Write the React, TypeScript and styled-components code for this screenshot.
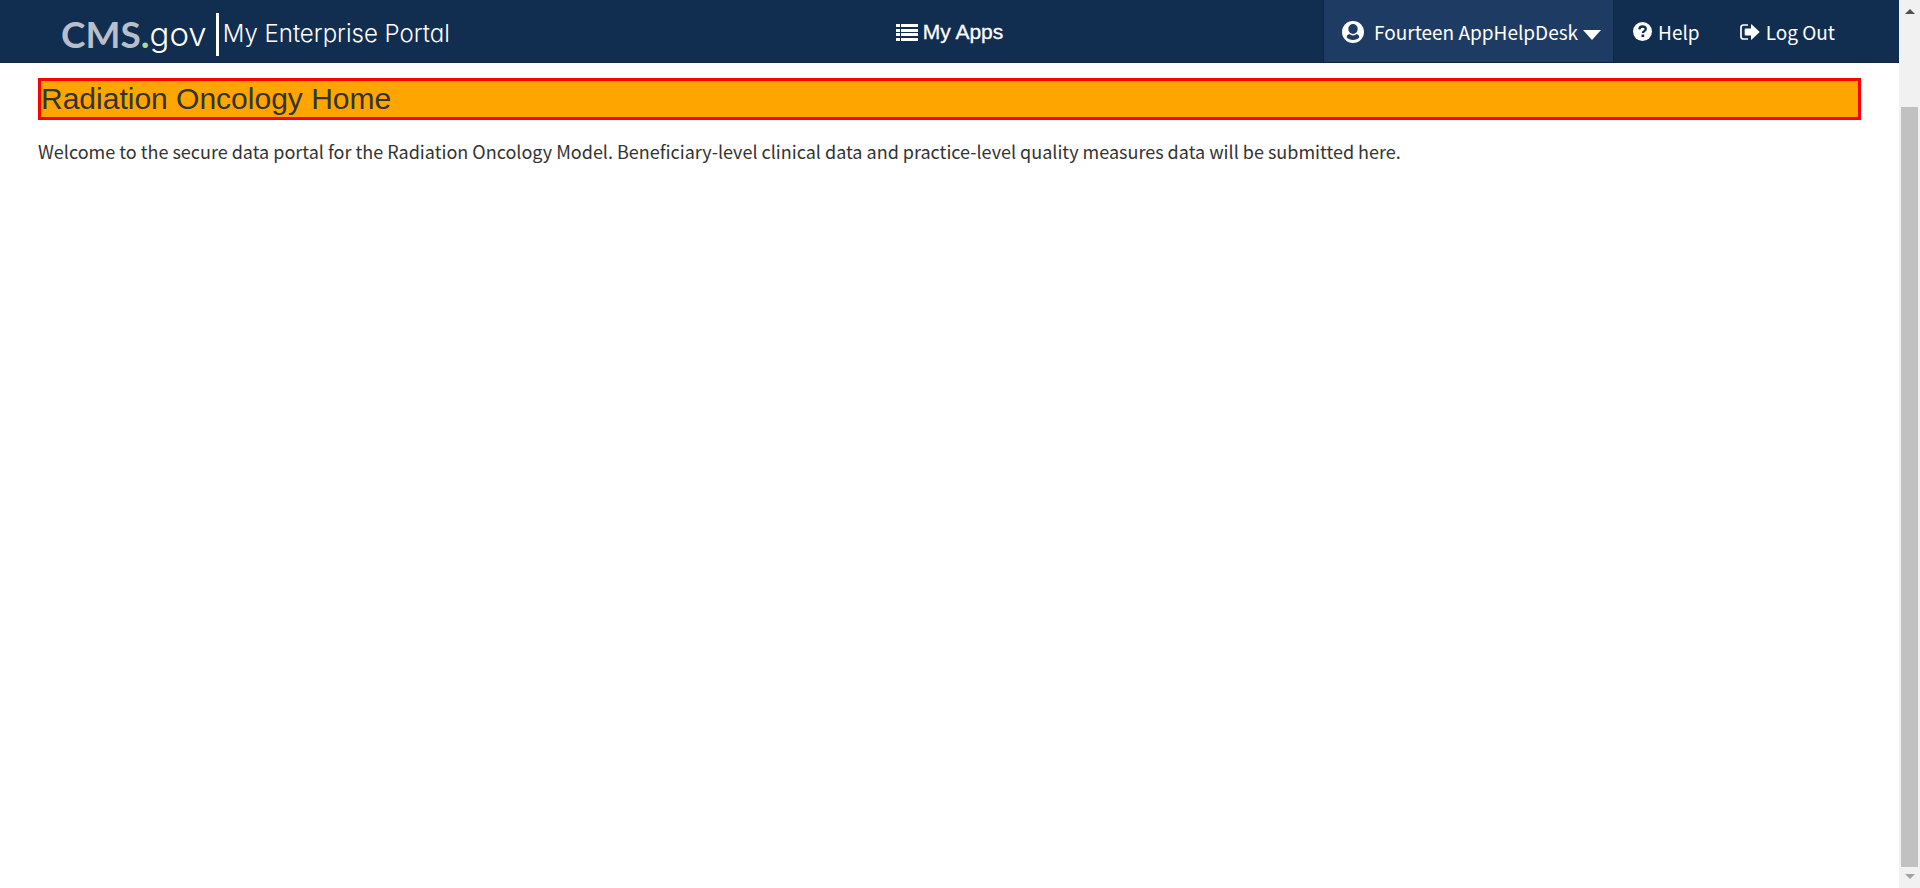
import React from "react";
import styled, { createGlobalStyle } from "styled-components";

const sans = `"Noto Sans CJK SC", "Noto Sans", sans-serif`;
const arial = `"Liberation Sans", Arial, sans-serif`;

const GlobalStyle = createGlobalStyle`
  *, *::before, *::after { box-sizing: border-box; }
  body { margin: 0; background: #fff; color: #333; font-family: ${sans}; }
`;

const Page = styled.div`
  display: flex;
  min-height: 100vh;
`;

const Content = styled.div`
  flex: 1;
  min-width: 0;
`;

const Header = styled.header`
  display: grid;
  grid-template-columns: 1fr auto 1fr;
  height: 63px;
  background: #112e51;
  border-bottom: 1px solid #0e2440;
  color: #fff;
`;

const Brand = styled.a`
  display: flex;
  align-items: center;
  padding: 6px 0 0 61px;
  color: #fff;
  text-decoration: none;
  white-space: nowrap;
`;

const BrandMark = styled.span`
  font: 700 37px/40px Lato, sans-serif;
  color: #b8bfca;
`;

const BrandDot = styled.span`
  color: #aed79b;
`;

const BrandGov = styled.span`
  font: 300 33px/40px Inter, sans-serif;
  color: #fff;
`;

const BrandDivider = styled.span`
  width: 3px;
  height: 43px;
  margin: 0 4px 0 9px;
  background: #fff;
`;

const BrandName = styled.span`
  font: 300 24px/40px Inter, sans-serif;
  font-feature-settings: "cv11";
`;

const AppsLink = styled.a`
  display: flex;
  align-items: center;
  gap: 5px;
  padding-top: 2px;
  color: #fff;
  font: 400 21px/24px ${arial};
  -webkit-text-stroke: 0.3px #fff;
  text-decoration: none;
`;

const Account = styled.nav`
  display: flex;
  justify-content: flex-end;
  padding-right: 43px;
`;

const AccountItem = styled.button<{ $active?: boolean }>`
  display: flex;
  align-items: center;
  padding: ${(p) => (p.$active ? "1px 12px 0 18px" : "1px 21px 0 19px")};
  border: solid #1c2430;
  border-width: 0 ${(p) => (p.$active ? 1 : 0)}px;
  background: ${(p) => (p.$active ? "#1e3c63" : "transparent")};
  color: #fff;
  font: 400 19px/30px ${sans};
  white-space: nowrap;
  cursor: pointer;
`;

const ItemLabel = styled.span<{ $gap: number }>`
  margin-left: ${(p) => p.$gap}px;
`;

const Caret = styled.span`
  margin: 6px 0 0 5px;
  border: 9px solid transparent;
  border-top: 10px solid #fff;
  border-bottom: 0;
`;

const Main = styled.main`
  padding: 15px 38px;
`;

const Title = styled.h1`
  margin: 0;
  border: 3px solid #f00;
  background: #ffa500;
  color: #333;
  font: 400 30px/36px ${arial};
`;

const Intro = styled.p`
  margin: 16px 0;
  font-size: 18px;
  line-height: 30px;
`;

const ScrollTrack = styled.div`
  position: sticky;
  top: 0;
  display: flex;
  flex-direction: column;
  align-items: center;
  justify-content: space-between;
  width: 21px;
  height: 100vh;
  padding: 9px 2px;
  background: #f1f1f1;
`;

const ScrollThumb = styled.div`
  flex: 1;
  width: 17px;
  margin: 93px 0 7px;
  background: #c1c1c1;
`;

const ScrollArrow = styled.span<{ $down?: boolean }>`
  border: solid transparent;
  border-width: ${(p) => (p.$down ? "5px 5px 0" : "0 5px 5px")};
  border-color: ${(p) => (p.$down ? "#a3a3a3 transparent" : "transparent transparent #505050")};
`;

const ListIcon = () => (
  <svg width="22" height="17" viewBox="0 0 22 17" fill="#fff" aria-hidden="true">
    {[0, 5, 9, 14].map((y) => (
      <React.Fragment key={y}>
        <rect x="0" y={y} width="4" height="3" />
        <rect x="5" y={y} width="17" height="3" />
      </React.Fragment>
    ))}
  </svg>
);

const UserIcon = () => (
  <svg width="22" height="22" viewBox="0 0 22 22" aria-hidden="true">
    <circle cx="11" cy="11" r="11" fill="#fff" />
    <ellipse cx="11" cy="8" rx="4.700" ry="5" fill="#1e3c63" />
    <path d="M4.600 16.200c.4-1.700 1.300-2.700 2.800-3.100 1 .9 2.200 1.400 3.600 1.400s2.600-.5 3.600-1.400c1.500.4 2.400 1.400 2.800 3.100C15.800 17.900 13.600 18.900 11 18.900s-4.800-1-6.400-2.700z" fill="#1e3c63" />
  </svg>
);

const HelpIcon = () => (
  <svg width="19" height="19" viewBox="0 0 19 19" aria-hidden="true">
    <circle cx="9.500" cy="9.500" r="9.500" fill="#fff" />
    <path d="M6.300 7.300C6.500 5.300 7.700 4.500 9.500 4.500s3.300.9 3.300 2.600c0 2.100-2.900 2-2.900 4" fill="none" stroke="#112e51" strokeWidth="2.300" />
    <rect x="8.500" y="12.500" width="2.700" height="2.600" fill="#112e51" />
  </svg>
);

const LogOutIcon = () => (
  <svg width="20" height="16" viewBox="0 0 20 16" aria-hidden="true">
    <path d="M8 1H3.500Q1 1 1 3.500v9Q1 15 3.500 15H8" fill="none" stroke="#fff" strokeWidth="1.700" />
    <path d="M5.500 4.500H11V.8q0-.8.800-.2l7.400 6.800q.6.600 0 1.200l-7.400 6.800q-.8.600-.8-.2v-3.700H5.500q-.8 0-.8-.8V5.300q0-.8.800-.8z" fill="#fff" />
  </svg>
);

export default function App() {
  return (
    <Page>
      <GlobalStyle />
      <Content>
        <Header>
          <Brand href="#">
            <BrandMark>
              CMS<BrandDot>.</BrandDot>
            </BrandMark>
            <BrandGov>gov</BrandGov>
            <BrandDivider />
            <BrandName>My Enterprise Portal</BrandName>
          </Brand>
          <AppsLink href="#">
            <ListIcon />
            My Apps
          </AppsLink>
          <Account>
            <AccountItem type="button" $active>
              <UserIcon />
              <ItemLabel $gap={10}>Fourteen AppHelpDesk</ItemLabel>
              <Caret />
            </AccountItem>
            <AccountItem type="button">
              <HelpIcon />
              <ItemLabel $gap={6}>Help</ItemLabel>
            </AccountItem>
            <AccountItem type="button">
              <LogOutIcon />
              <ItemLabel $gap={6}>Log Out</ItemLabel>
            </AccountItem>
          </Account>
        </Header>
        <Main>
          <Title>Radiation Oncology Home</Title>
          <Intro>
            Welcome to the secure data portal for the Radiation Oncology Model. Beneficiary-level
            clinical data and practice-level quality measures data will be submitted here.
          </Intro>
        </Main>
      </Content>
      <ScrollTrack aria-hidden="true">
        <ScrollArrow />
        <ScrollThumb />
        <ScrollArrow $down />
      </ScrollTrack>
    </Page>
  );
}
